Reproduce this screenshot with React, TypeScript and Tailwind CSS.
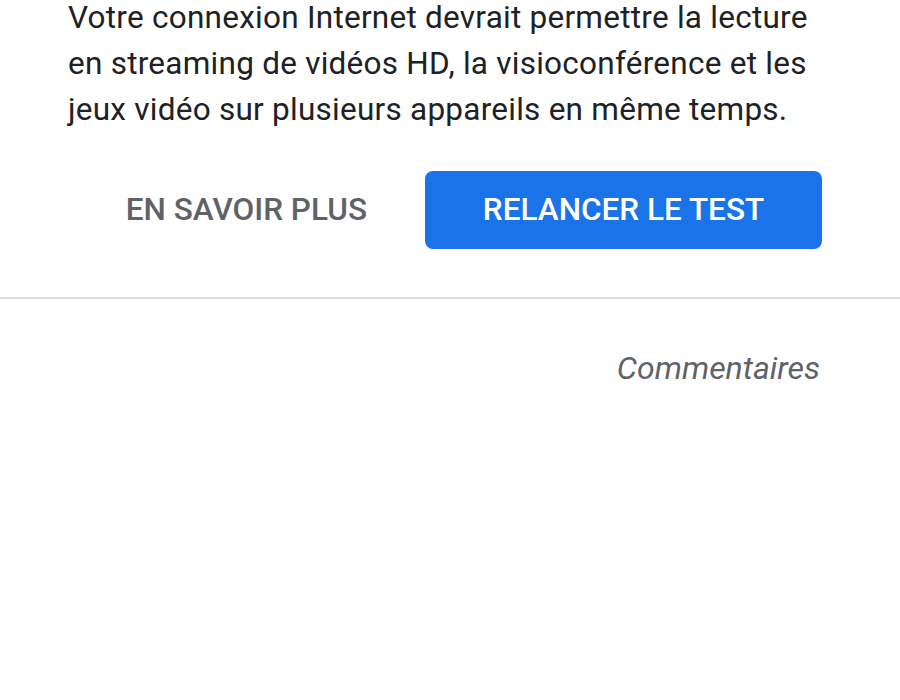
export default function App() {
  return (
    <div className="min-h-[700px] w-[900px] bg-white font-['Roboto',sans-serif]">
      <div className="pl-[68px] pr-[78px]">
        <p className="-mt-[5px] text-[31.5px] leading-[46px] tracking-[0.25px] text-[#202124]">
          Votre connexion Internet devrait permettre la lecture en streaming de vidéos HD, la visioconférence et les
          jeux vidéo sur plusieurs appareils en même temps.
        </p>
        <div className="mt-[38px] flex items-center justify-end">
          <button className="mr-[58px] h-[78px] text-[31.5px] font-medium text-[#5f6368]">EN SAVOIR PLUS</button>
          <button className="h-[78px] w-[397px] rounded-[8px] bg-[#1a73e8] text-[31.5px] font-medium text-white">
            RELANCER LE TEST
          </button>
        </div>
      </div>
      <div className="mt-[48px] h-[2px] w-full bg-[#dadce0]" />
      <div className="pr-[80px] pt-[45px] text-right">
        <span className="text-[32px] italic text-[#5f6368]">Commentaires</span>
      </div>
    </div>
  );
}
